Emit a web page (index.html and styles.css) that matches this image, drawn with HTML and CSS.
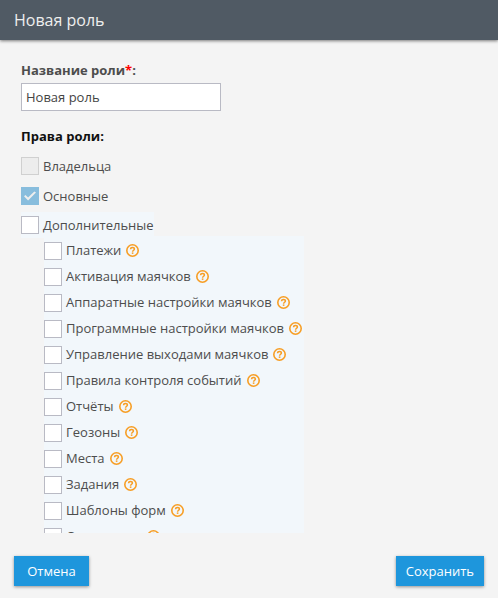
FILE: index.html
```html
<!DOCTYPE html>
<html lang="ru">
  <head>
    <meta charset="UTF-8" />
    <meta name="viewport" content="width=device-width, initial-scale=1.0" />
    <title>Новая роль</title>
    <link rel="stylesheet" href="styles.css">
  </head>
  <body>
    <svg class="sprite" aria-hidden="true">
      <symbol id="help" viewBox="0 0 13 13">
        <circle cx="6.5" cy="6.5" r="5.7" fill="none" stroke="currentColor" stroke-width="1.6" />
        <path d="M4.6 5.3C4.6 4.2 5.4 3.6 6.5 3.6S8.4 4.2 8.4 5.1C8.4 6.2 6.6 6.3 6.6 7.7" fill="none" stroke="currentColor" stroke-width="1.5" />
        <rect x="5.8" y="8.4" width="1.6" height="1.5" fill="currentColor" />
      </symbol>
    </svg>
    <form class="dialog">
      <header class="header">
        <h1>Новая роль</h1>
      </header>

      <div class="content">
        <label class="name-label" for="roleName">Название роли<span class="required">*</span>:</label>
        <input class="name-input" type="text" id="roleName" value="Новая роль" />

        <h2>Права роли:</h2>
        <div class="right">
          <input type="checkbox" id="owner" disabled />
          <label for="owner">Владельца</label>
        </div>
        <div class="right">
          <input type="checkbox" id="basic" checked disabled />
          <label for="basic">Основные</label>
        </div>
        <div class="right right-parent">
          <input type="checkbox" id="extra" />
          <label for="extra">Дополнительные</label>
        </div>

        <ul class="rights">
          <li>
            <input type="checkbox" id="payments" />
            <label for="payments">Платежи</label>
            <svg class="help"><use href="#help" /></svg>
          </li>
          <li>
            <input type="checkbox" id="activation" />
            <label for="activation">Активация маячков</label>
            <svg class="help"><use href="#help" /></svg>
          </li>
          <li>
            <input type="checkbox" id="hardware" />
            <label for="hardware">Аппаратные настройки маячков</label>
            <svg class="help"><use href="#help" /></svg>
          </li>
          <li>
            <input type="checkbox" id="software" />
            <label for="software">Программные настройки маячков</label>
            <svg class="help"><use href="#help" /></svg>
          </li>
          <li>
            <input type="checkbox" id="outputs" />
            <label for="outputs">Управление выходами маячков</label>
            <svg class="help"><use href="#help" /></svg>
          </li>
          <li>
            <input type="checkbox" id="rules" />
            <label for="rules">Правила контроля событий</label>
            <svg class="help"><use href="#help" /></svg>
          </li>
          <li>
            <input type="checkbox" id="reports" />
            <label for="reports">Отчёты</label>
            <svg class="help"><use href="#help" /></svg>
          </li>
          <li>
            <input type="checkbox" id="zones" />
            <label for="zones">Геозоны</label>
            <svg class="help"><use href="#help" /></svg>
          </li>
          <li>
            <input type="checkbox" id="places" />
            <label for="places">Места</label>
            <svg class="help"><use href="#help" /></svg>
          </li>
          <li>
            <input type="checkbox" id="tasks" />
            <label for="tasks">Задания</label>
            <svg class="help"><use href="#help" /></svg>
          </li>
          <li>
            <input type="checkbox" id="forms" />
            <label for="forms">Шаблоны форм</label>
            <svg class="help"><use href="#help" /></svg>
          </li>
          <li>
            <input type="checkbox" id="employees" />
            <label for="employees">Сотрудники</label>
            <svg class="help"><use href="#help" /></svg>
          </li>
        </ul>
      </div>

      <footer class="footer">
        <button type="button" class="btn">Отмена</button>
        <button type="submit" class="btn">Сохранить</button>
      </footer>
    </form>
  </body>
</html>
```
FILE: styles.css
```css
* {
    margin: 0;
    padding: 0;
    box-sizing: border-box;
}

body {
    font-family: "Open Sans", "Noto Sans", sans-serif;
    font-size: 13px;
    line-height: 18px;
    color: #4d4d4d;
    background-color: #f4f4f4;
}

.sprite {
    display: none;
}

.dialog {
    display: flex;
    flex-direction: column;
    height: 100vh;
}

.header {
    flex: none;
    padding: 8px 14px;
    background-color: #505a64;
    box-shadow: 0 1px 3px rgba(0, 0, 0, 0.5);
}

h1 {
    font-size: 16px;
    font-weight: normal;
    line-height: 24px;
    color: #eee;
}

.content {
    flex: 1;
    min-height: 0;
    padding: 0 21px;
    margin-top: 21px;
    overflow: hidden;
}

.name-label {
    display: block;
    margin-bottom: 4px;
    font-weight: bold;
}

.required {
    color: #f00;
}

.name-input {
    display: block;
    width: 200px;
    height: 28px;
    padding: 0 4px;
    font: inherit;
    color: #444;
    background-color: #fff;
    border: 1px solid #b9bac4;
}

h2 {
    margin: 16px 0 6px;
    font-size: 13px;
    font-weight: bold;
    line-height: 18px;
    color: #111;
}

.right,
.rights li {
    display: flex;
    align-items: center;
    gap: 4px;
}

.right {
    height: 30px;
}

.right-parent {
    width: max-content;
    height: 26px;
    margin-top: 1px;
    background-color: #f2f7fb;
}

.rights {
    width: max-content;
    margin: -2px 0 0 23px;
    padding: 2px 2px 2px 0;
    list-style: none;
    background-color: #f2f7fb;
}

.rights li {
    height: 26px;
}

.rights label {
    padding-bottom: 2px;
}

input[type="checkbox"] {
    flex: none;
    width: 18px;
    height: 18px;
    appearance: none;
    background-color: #fff;
    border: 1px solid #b9bac4;
}

input[type="checkbox"]:disabled {
    background-color: #ededed;
    border-color: #d0d0d0;
}

input[type="checkbox"]:checked {
    display: grid;
    place-items: center;
    background-color: #88bddd;
    border-color: #88bddd;
}

input[type="checkbox"]:checked::before {
    content: "";
    width: 12px;
    height: 10px;
    background-color: #eee;
    clip-path: polygon(0 52%, 12% 40%, 34% 66%, 86% 4%, 100% 16%, 34% 96%);
}

.help {
    width: 13px;
    height: 13px;
    margin: 0 0 1px 1px;
    color: #f79e25;
}

.footer {
    display: flex;
    flex: none;
    justify-content: space-between;
    padding: 23px 14px 12px;
}

.btn {
    height: 30px;
    padding: 0 10px;
    min-width: 75px;
    font: inherit;
    color: #fff;
    background-color: #1e96dc;
    border: 0;
    box-shadow: 0 1px 3px rgba(0, 0, 0, 0.4);
    cursor: pointer;
}
```
